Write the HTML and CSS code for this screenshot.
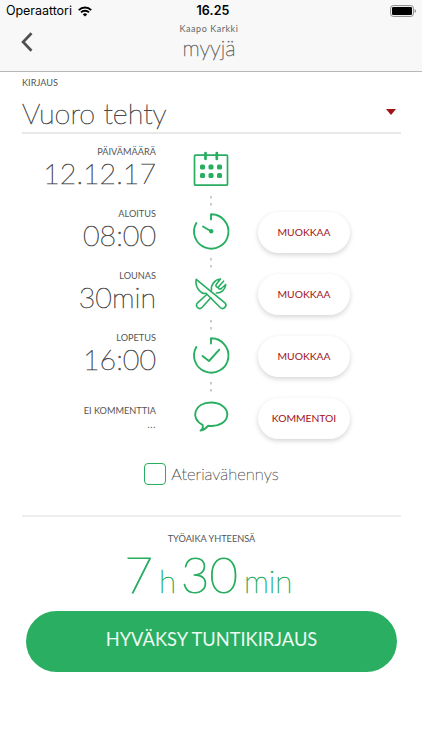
FILE: index.html
```
<!DOCTYPE html>
<html lang="fi">
<head>
<meta charset="utf-8">
<title>Tuntikirjaus</title>
<link rel="stylesheet" href="styles.css">
</head>
<body>
<header class="header">
  <div class="status">
    <div class="carrier"><span>Operaattori</span>
      <svg width="14" height="11" viewBox="0 0 14 11"><path d="M.8 4.1a8.8 8.8 0 0 1 12.4 0M3 6.4a5.7 5.7 0 0 1 8 0" fill="none" stroke="#000" stroke-width="2"/><path d="M7 10.6 4.8 8.4a3.1 3.1 0 0 1 4.4 0z"/></svg>
    </div>
    <div class="clock">16.25</div>
    <svg class="battery" width="27" height="12" viewBox="0 0 27 12"><rect x=".6" y=".6" width="22.8" height="10.8" rx="2.6" fill="none" stroke="#888"/><rect x="2" y="2" width="20" height="8" rx="1.3"/><path d="M24.6 4v4q1.4-.6 1.4-2t-1.4-2" fill="#888"/></svg>
  </div>
  <div class="nav">
    <svg class="back" width="14" height="20" viewBox="0 0 14 20"><path d="M11.500 1.300 3.100 10l8.400 8.700" fill="none" stroke="#505050" stroke-width="2.7"/></svg>
    <div class="title"><div class="person">Kaapo Karkki</div><div class="role">myyjä</div></div>
    <div></div>
  </div>
</header>
<main class="main">
  <div class="label">KIRJAUS</div>
  <div class="select"><span class="select-text">Vuoro tehty</span><span class="caret"></span></div>
  <div class="rows">
    <div class="row">
      <div class="info"><div class="label">PÄIVÄMÄÄRÄ</div><div class="value">12.12.17</div></div>
      <svg class="icon" viewBox="0 0 38 62"><g fill="none" stroke="#27ae60" stroke-width="1.7"><rect x="2.5" y="16.2" width="33" height="30" rx="1"/><path d="M13.5 14v6M24.800 14v6" stroke-width="2.7" stroke-linecap="round"/></g><g fill="#27ae60"><rect x="8" y="25.500" width="5" height="5" rx="1.500"/><rect x="16.500" y="25.500" width="5" height="5" rx="1.500"/><rect x="25" y="25.500" width="5" height="5" rx="1.500"/><rect x="8" y="34" width="5" height="5" rx="1.500"/><rect x="16.500" y="34" width="5" height="5" rx="1.500"/><rect x="25" y="34" width="5" height="5" rx="1.500"/></g><path class="dots" d="M19 57v2.500M19 64v2.500"/></svg>
    </div>
    <div class="row">
      <div class="info"><div class="label">ALOITUS</div><div class="value">08:00</div></div>
      <svg class="icon" viewBox="0 0 38 62"><path class="line" d="M19 18.500v-5.200a17.200 17.200 0 1 1-14.700 8.700"/><path class="line" d="m11 25.500 8 4.700"/><circle cx="19.200" cy="30.200" r="2.200" fill="#27ae60"/><path class="dots" d="M19 57v2.500M19 64v2.500"/></svg>
      <button class="pill">MUOKKAA</button>
    </div>
    <div class="row">
      <div class="info"><div class="label">LOUNAS</div><div class="value">30min</div></div>
      <svg class="icon" viewBox="0 0 38 62"><g class="line thin"><path d="M4.200 16.300C3.300 21 5 25.600 8.700 28.800c1.800 1.600 3.600 1.900 5.300 1.500L28.200 44.500c3.200 2.900 7.700-1.500 4.700-4.700z"/><path d="m14.800 31.500-9.200 8.300c-3.300 3.200 1.300 7.800 4.600 4.500l8.600-9.500M19.500 27.200c-1-5 3-10.700 9-11.200M33.800 21.500c-.6 5.200-4.700 8.900-9.500 8.500M28.500 16l-4.300 5.500c-1 1.900.7 3.400 2.400 2.300l4.900-5.600M31.500 18.200l-4.900 5.600M33.800 21.500l-4.500 4c-1.700 1.300-3.600-.1-2.700-1.700"/></g><path class="dots" d="M19 57v2.500M19 64v2.500"/></svg>
      <button class="pill">MUOKKAA</button>
    </div>
    <div class="row">
      <div class="info"><div class="label">LOPETUS</div><div class="value">16:00</div></div>
      <svg class="icon" viewBox="0 0 38 62"><path class="line" d="M19 18.500v-5.200a17.200 17.200 0 1 1-14.700 8.700"/><path class="line" d="m10.500 31 6.500 5 10.300-11.300"/><path class="dots" d="M19 57v2.500M19 64v2.500"/></svg>
      <button class="pill">MUOKKAA</button>
    </div>
    <div class="row">
      <div class="info comment"><div class="label">EI KOMMENTTIA</div><div class="label ellipsis">...</div></div>
      <svg class="icon" viewBox="0 0 38 62"><path class="line" d="M8.500 43.600c2.300-1.300 2.700-3.500 2.100-5.700C-2.500 31.300 2.500 15.500 19 15.500c9.200 0 16.300 5.300 16.300 11.900 0 7.300-8.500 12.800-19.300 11.400-2 2.500-4.400 4.300-7.500 4.800z"/></svg>
      <button class="pill">KOMMENTOI</button>
    </div>
  </div>
  <label class="meal"><span class="box"></span><span>Ateriavähennys</span></label>
  <section class="total">
    <div class="label">TYÖAIKA YHTEENSÄ</div>
    <div class="sum"><span class="big">7</span><span class="unit hour">h</span><span class="big">30</span><span class="unit">min</span></div>
  </section>
  <button class="submit">HYVÄKSY TUNTIKIRJAUS</button>
</main>
</body>
</html>
```
FILE: styles.css
```
* { box-sizing: border-box; }
body { margin: 0; width: 422px; height: 750px; overflow: hidden; background: #fff; color: #4a4a4a; font-family: Lato, sans-serif; }
svg { display: block; }
button { border: 0; font-family: inherit; padding: 0; }
.header { height: 72px; background: #f8f8f8; border-bottom: 1px solid #b8b8b8; }
.status { height: 22px; padding: 0 6px; display: grid; grid-template-columns: 1fr auto 1fr; align-items: center; font: 12.5px/22px Inter, sans-serif; color: #000; }
.carrier { display: flex; align-items: center; gap: 6px; letter-spacing: -.05px; }
.clock { font-weight: 600; font-size: 12.5px; padding-left: 4px; letter-spacing: .1px; }
.battery { justify-self: end; margin-right: -1px; }
.nav { display: grid; grid-template-columns: 1fr auto 1fr; padding: 0 20px; }
.back { margin-top: 10px; }
.title { text-align: center; padding-right: 4px; }
.person { font-size: 9px; line-height: 13px; letter-spacing: .55px; color: #666; }
.role, .select-text, .value, .meal, .sum { font-weight: 200; -webkit-text-stroke: .6px currentColor; }
.role { font-size: 21.8px; line-height: 26px; color: #686868; }
.main { padding: 4px 21px 0 22px; }
.label { font-size: 9.2px; line-height: 14px; white-space: nowrap; color: #555; }
.select { height: 44px; border-bottom: 2px solid #e8e8e8; display: flex; align-items: center; justify-content: space-between; padding-right: 5px; }
.select-text { font-size: 28.8px; line-height: 40px; padding-top: 3px; }
.caret { border: 5px solid transparent; border-top: 6px solid #a01218; border-bottom: 0; margin-top: 2px; }
.rows { margin-top: 5px; }
.row { height: 62px; display: grid; grid-template-columns: 134px 110px 92px; align-items: center; }
.info { text-align: right; align-self: start; padding-top: 6px; }
.comment { padding-top: 17px; }
.ellipsis { letter-spacing: .7px; }
.icon { width: 38px; height: 62px; overflow: visible; justify-self: center; }
.value { font-size: 28.6px; line-height: 29px; white-space: nowrap; }
.line { fill: none; stroke: #27ae60; stroke-width: 1.9; stroke-linecap: round; stroke-linejoin: round; }
.thin { stroke-width: 1.6; }
.dots { stroke: #c4bcbc; stroke-width: 1.6; }
.pill { width: 92px; height: 41px; border-radius: 21px; background: #fff; color: #a01218; font-size: 10.3px; box-shadow: 0 2px 5px rgba(0,0,0,.17); margin-left: -8px; padding-bottom: 1px; }
.meal { display: flex; align-items: center; justify-content: center; gap: 5px; margin-top: 14px; height: 22px; font-size: 16.6px; line-height: 24px; -webkit-text-stroke-width: .35px; }
.box { width: 22px; height: 22px; border: 1.500px solid #27ae60; border-radius: 4px; }
.total { margin-top: 30px; border-top: 2px solid #eee; padding-top: 15px; text-align: center; }
.sum { display: flex; justify-content: center; align-items: baseline; color: #27ae60; height: 60px; line-height: 56px; padding-right: 6px; }
.big { font-size: 49px; -webkit-text-stroke-width: 1.1px; }
.unit { font-size: 31.5px; margin-left: 6px; }
.hour { margin-right: 5px; }
.submit { display: block; width: 371px; height: 61px; margin: 5px 0 0 4px; border-radius: 31px; background: #2aae62; color: #eefaf2; font-size: 18.3px; padding-bottom: 5px; }
```
